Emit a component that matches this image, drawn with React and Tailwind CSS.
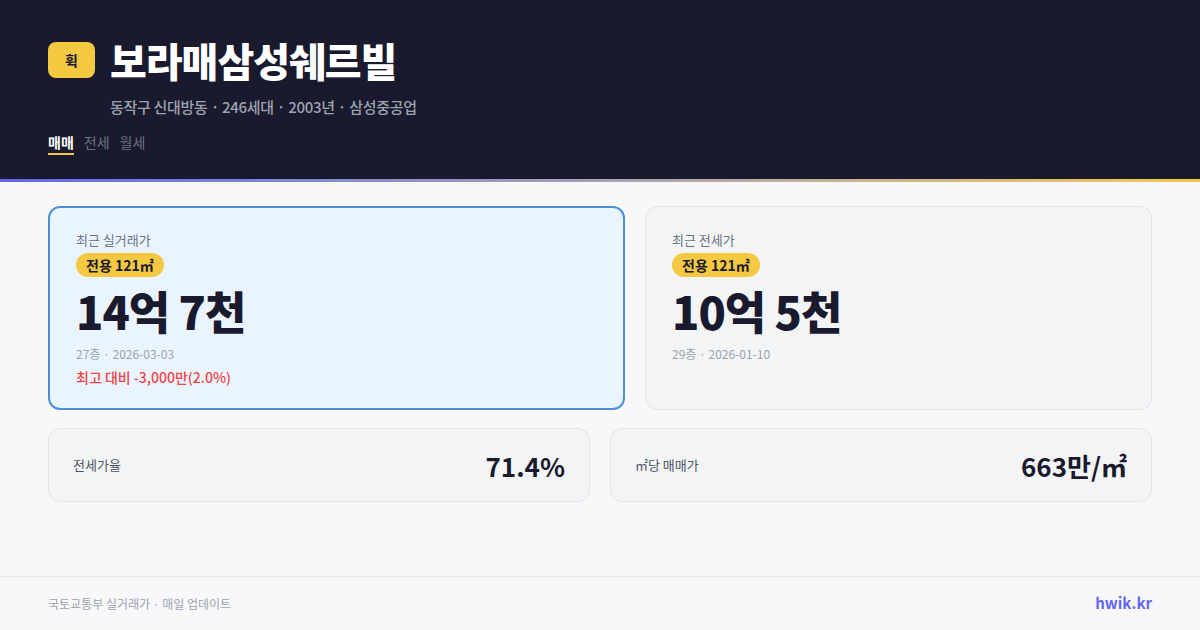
import React from 'react';

const font = { fontFamily: '"Noto Sans CJK KR", "Noto Sans", sans-serif' };

function PriceCard({ active, label, price, meta, diff }) {
  return (
    <div
      className={
        active
          ? 'rounded-xl border-2 border-[#4a90d9] bg-[#eaf4fe] px-[26px] pt-[23px] h-[204px]'
          : 'rounded-xl border border-[#e3e4e8] bg-[#f3f4f6] px-[26px] pt-[24px] h-[204px]'
      }
    >
      <div className="text-[13px] leading-[18px] text-[#6b7280]">{label}</div>
      <div className="mt-[4px] inline-flex items-center h-[24px] rounded-full bg-[#f5c842] px-[10px] text-[14px] font-bold text-[#1a1a2e]">
        전용 121㎡
      </div>
      <div className="mt-[6px] text-[45px] leading-[56px] font-black tracking-[-1px] text-[#1a1a2e]">{price}</div>
      <div className="mt-[6px] text-[12px] leading-[18px] text-[#9ca3af]">{meta}</div>
      {diff && <div className="mt-[4px] text-[14px] leading-[20px] font-medium text-[#ef4444]">{diff}</div>}
    </div>
  );
}

function StatCard({ label, value }) {
  return (
    <div className="h-[74px] rounded-xl border border-[#e3e4e8] bg-[#f3f4f6] px-6 flex items-center justify-between">
      <span className="text-[13px] text-[#4b5563]">{label}</span>
      <span className="text-[26px] font-bold text-[#1a1a2e]">{value}</span>
    </div>
  );
}

export default function App() {
  return (
    <div className="w-[1200px] h-[630px] bg-[#f8f8fa] flex flex-col overflow-hidden" style={font}>
      <header className="bg-[#1a1a2e] h-[179px] px-12 pt-[38px]">
        <div className="flex items-center gap-[15px]">
          <div className="w-[47px] h-[36px] rounded-lg bg-[#f5c842] flex items-center justify-center text-[14px] font-bold text-[#1a1a2e]">
            휙
          </div>
          <h1 className="text-[40px] leading-[44px] font-black text-white tracking-[-1px]">보라매삼성쉐르빌</h1>
        </div>
        <div className="ml-[62px] mt-[15px] text-[15px] leading-[20px] font-medium text-[#9ca3af] tracking-[-0.3px]">
          동작구 신대방동 · 246세대 · 2003년 · 삼성중공업
        </div>
        <div className="mt-[15px] flex gap-[10px] text-[14px] leading-[20px]">
          <span className="text-white font-bold border-b-2 border-[#f5c842] pb-[1px]">매매</span>
          <span className="text-[#6b7280]">전세</span>
          <span className="text-[#6b7280]">월세</span>
        </div>
      </header>
      <div className="h-[3px] bg-gradient-to-r from-[#6366f1] to-[#f5c842]" />
      <main className="flex-1 px-12 pt-[24px]">
        <div className="grid grid-cols-[577px_1fr] gap-5">
          <PriceCard active label="최근 실거래가" price="14억 7천" meta="27층 · 2026-03-03" diff="최고 대비 -3,000만(2.0%)" />
          <PriceCard label="최근 전세가" price="10억 5천" meta="29층 · 2026-01-10" />
        </div>
        <div className="mt-[18px] grid grid-cols-2 gap-5">
          <StatCard label="전세가율" value="71.4%" />
          <StatCard label="㎡당 매매가" value="663만/㎡" />
        </div>
      </main>
      <footer className="h-[54px] border-t border-[#e5e7eb] px-12 flex items-center justify-between">
        <span className="text-[12px] text-[#9ca3af]">국토교통부 실거래가 · 매일 업데이트</span>
        <span className="text-[15px] font-bold text-[#6366f1]">hwik.kr</span>
      </footer>
    </div>
  );
}
